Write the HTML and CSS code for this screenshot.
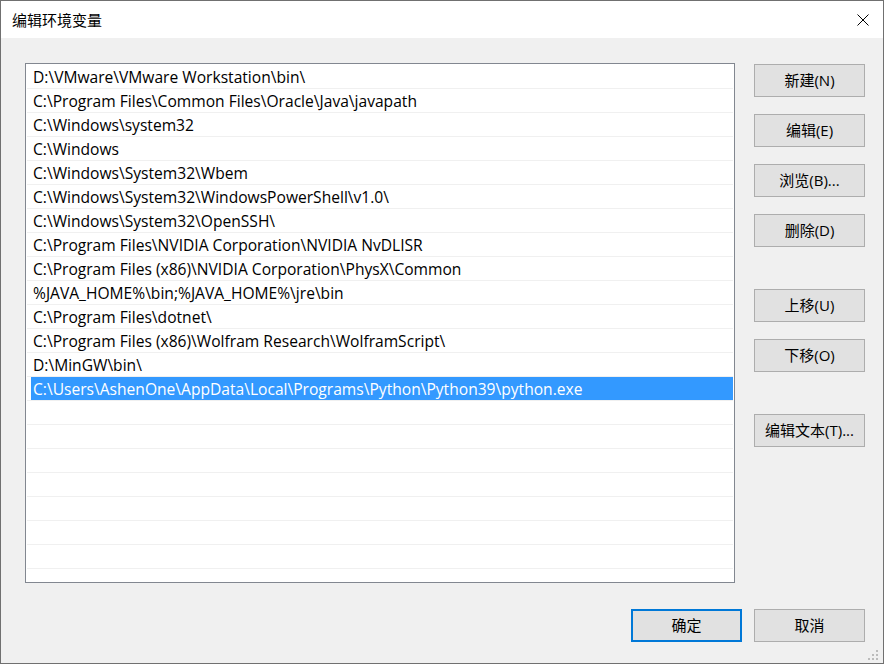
FILE: index.html
```html
<!DOCTYPE html>
<html lang="zh-CN">
<head>
<meta charset="UTF-8">
<title>编辑环境变量</title>
<link rel="stylesheet" href="styles.css">
</head>
<body>
<div class="window">
<div class="titlebar">
<span class="title">编辑环境变量</span>
<span class="close">
<svg width="12" height="12" viewBox="0 0 12 12"><path d="M0.5 0.5 L11.5 11.5 M11.5 0.5 L0.5 11.5" stroke="#000" stroke-width="1" fill="none"/></svg>
</span>
</div>
<div class="content">
<div class="main">
<div class="list">
<div class="row"><span class="txt">D:\VMware\VMware Workstation\bin\</span></div>
<div class="row"><span class="txt">C:\Program Files\Common Files\Oracle\Java\javapath</span></div>
<div class="row"><span class="txt">C:\Windows\system32</span></div>
<div class="row"><span class="txt">C:\Windows</span></div>
<div class="row"><span class="txt">C:\Windows\System32\Wbem</span></div>
<div class="row"><span class="txt">C:\Windows\System32\WindowsPowerShell\v1.0\</span></div>
<div class="row"><span class="txt">C:\Windows\System32\OpenSSH\</span></div>
<div class="row"><span class="txt">C:\Program Files\NVIDIA Corporation\NVIDIA NvDLISR</span></div>
<div class="row"><span class="txt">C:\Program Files (x86)\NVIDIA Corporation\PhysX\Common</span></div>
<div class="row"><span class="txt">%JAVA_HOME%\bin;%JAVA_HOME%\jre\bin</span></div>
<div class="row"><span class="txt">C:\Program Files\dotnet\</span></div>
<div class="row"><span class="txt">C:\Program Files (x86)\Wolfram Research\WolframScript\</span></div>
<div class="row"><span class="txt">D:\MinGW\bin\</span></div>
<div class="row selected"><span class="txt">C:\Users\AshenOne\AppData\Local\Programs\Python\Python39\python.exe</span></div>
<div class="row"><span class="txt"></span></div>
<div class="row"><span class="txt"></span></div>
<div class="row"><span class="txt"></span></div>
<div class="row"><span class="txt"></span></div>
<div class="row"><span class="txt"></span></div>
<div class="row"><span class="txt"></span></div>
<div class="row"><span class="txt"></span></div>
<div class="row"><span class="txt"></span></div>
</div>
<div class="side">
<button class="btn">新建(N)</button>
<button class="btn">编辑(E)</button>
<button class="btn">浏览(B)...</button>
<button class="btn">删除(D)</button>
<button class="btn group">上移(U)</button>
<button class="btn">下移(O)</button>
<button class="btn group">编辑文本(T)...</button>
</div>
</div>
<div class="footer">
<button class="btn default">确定</button>
<button class="btn">取消</button>
</div>
<svg class="grip" width="12" height="12" viewBox="0 0 12 12">
<rect x="8" y="0" width="2" height="2" fill="#bcbcbc"/>
<rect x="4" y="4" width="2" height="2" fill="#bcbcbc"/>
<rect x="8" y="4" width="2" height="2" fill="#bcbcbc"/>
<rect x="0" y="8" width="2" height="2" fill="#bcbcbc"/>
<rect x="4" y="8" width="2" height="2" fill="#bcbcbc"/>
<rect x="8" y="8" width="2" height="2" fill="#bcbcbc"/>
</svg>
</div>
</div>
</body>
</html>
```

FILE: styles.css
```css
/* Reset */
* {
margin: 0;
padding: 0;
box-sizing: border-box;
font-family: "Open Sans", "Noto Sans CJK SC", sans-serif;
}
body {
background-color: #f0f0f0;
}
/* Window frame */
.window {
width: 884px;
height: 664px;
border: 1px solid #707070;
display: flex;
flex-direction: column;
background-color: #f0f0f0;
}
.titlebar {
height: 37px;
background-color: #fff;
display: flex;
align-items: center;
justify-content: space-between;
padding-left: 11px;
padding-right: 14px;
}
.title {
font-size: 15px;
color: #000;
}
.close {
display: flex;
width: 12px;
height: 12px;
}
/* Content */
.content {
flex: 1;
position: relative;
padding: 25px 18px 0 24px;
}
.main {
display: flex;
gap: 19px;
}
.list {
width: 710px;
height: 520px;
background-color: #fff;
border: 1px solid #828790;
padding: 1px 1px 0 1px;
overflow: hidden;
}
.row {
height: 24px;
border-bottom: 1px solid #f0f0f0;
padding-left: 4px;
}
.txt {
display: block;
height: 23px;
line-height: 23px;
padding-top: 1px;
padding-left: 2px;
font-size: 15.6px;
color: #000;
white-space: nowrap;
}
.row.selected .txt {
background-color: #3399ff;
color: #fff;
}
/* Buttons */
.side {
display: flex;
flex-direction: column;
gap: 17px;
padding-top: 1px;
}
.btn {
width: 111px;
height: 33px;
background-color: #e1e1e1;
border: 1px solid #adadad;
font-size: 15px;
color: #000;
padding-bottom: 3px;
}
.btn.group {
margin-top: 25px;
}
.btn.default {
border: 2px solid #0078d7;
}
.footer {
display: flex;
justify-content: flex-end;
gap: 12px;
margin-top: 26px;
}
.grip {
position: absolute;
right: 3px;
bottom: 1px;
}
```
